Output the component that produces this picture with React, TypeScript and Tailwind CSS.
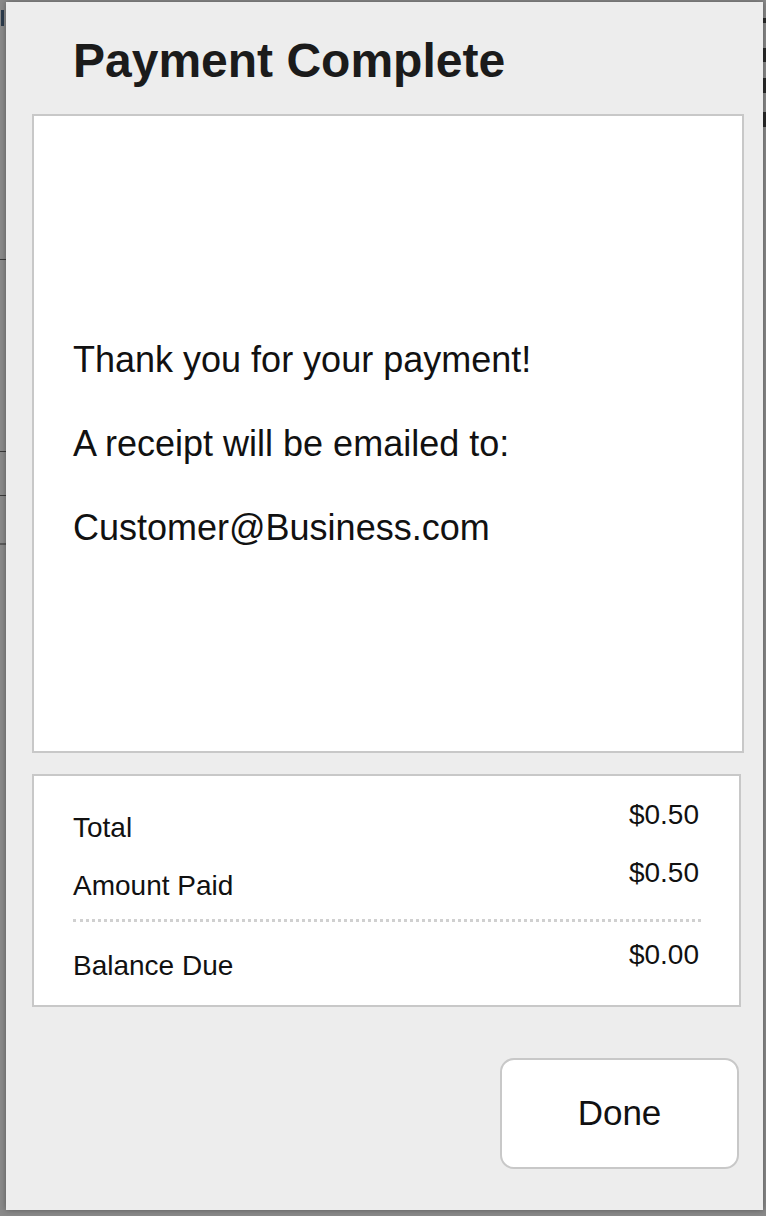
import React from "react";

const font = { fontFamily: '"Liberation Sans", Arial, Helvetica, sans-serif' };

export default function App() {
  return (
    <div
      className="relative w-[766px] h-[1216px] overflow-hidden bg-[#8a8a8a] pt-[2px] pl-[6px]"
      style={font}
    >
      {/* faint underlying page marks behind the overlay */}
      <div className="absolute left-[1px] top-[10px] w-[3px] h-[16px] bg-[#2c3b4c]" />
      <div className="absolute left-0 top-[259px] w-[6px] h-[1px] bg-[#3a3a3a]" />
      <div className="absolute left-0 top-[451px] w-[6px] h-[1px] bg-[#3a3a3a]" />
      <div className="absolute left-0 top-[495px] w-[6px] h-[1px] bg-[#3a3a3a]" />
      <div className="absolute left-0 top-[543px] w-[6px] h-[2px] bg-[#5a5a5a]" />
      <div className="absolute right-0 top-[18px] w-[3px] h-[5px] bg-[#2a2a2a]" />
      <div className="absolute right-0 top-[48px] w-[3px] h-[14px] bg-[#2a2a2a]" />
      <div className="absolute right-0 top-[78px] w-[3px] h-[15px] bg-[#2a2a2a]" />
      <div className="absolute right-0 top-[112px] w-[3px] h-[15px] bg-[#2a2a2a]" />

      <div className="relative w-[757px] h-[1208px] bg-[#ededed] shadow-[0_0_6px_rgba(0,0,0,0.35)] pl-[26px] flex flex-col">
        <div className="h-[112px] pt-[35px] pl-[41px]">
          <h1 className="text-[48px] leading-[48px] font-bold text-[#1b1b1b]">
            Payment Complete
          </h1>
        </div>

        <div className="w-[712px] h-[639px] bg-white border-2 border-[#c8c8c8] pt-[202px] pl-[39px] text-[36px] leading-[84px] text-[#111]">
          <p>Thank you for your payment!</p>
          <p>A receipt will be emailed to:</p>
          <p>Customer@Business.com</p>
        </div>

        <div className="mt-[21px] w-[709px] h-[233px] bg-white border-2 border-[#c8c8c8] pt-[25px] pl-[39px] pr-[40px] text-[28px] leading-[28px] text-[#111]">
          <div className="flex justify-between">
            <span className="pt-[13px]">Total</span>
            <span>$0.50</span>
          </div>
          <div className="mt-[17px] flex justify-between">
            <span className="pt-[13px]">Amount Paid</span>
            <span>$0.50</span>
          </div>
          <div className="mt-[19px] mr-[-2px] border-t-[3px] border-dotted border-[#d0d0d0]" />
          <div className="mt-[19px] flex justify-between">
            <span className="pt-[11px]">Balance Due</span>
            <span>$0.00</span>
          </div>
        </div>

        <div className="mt-[51px] w-[707px] flex justify-end">
          <button className="w-[239px] h-[111px] bg-white border-2 border-[#c8c8c8] rounded-[14px] text-[35px] text-[#111]">
            Done
          </button>
        </div>
      </div>
    </div>
  );
}
